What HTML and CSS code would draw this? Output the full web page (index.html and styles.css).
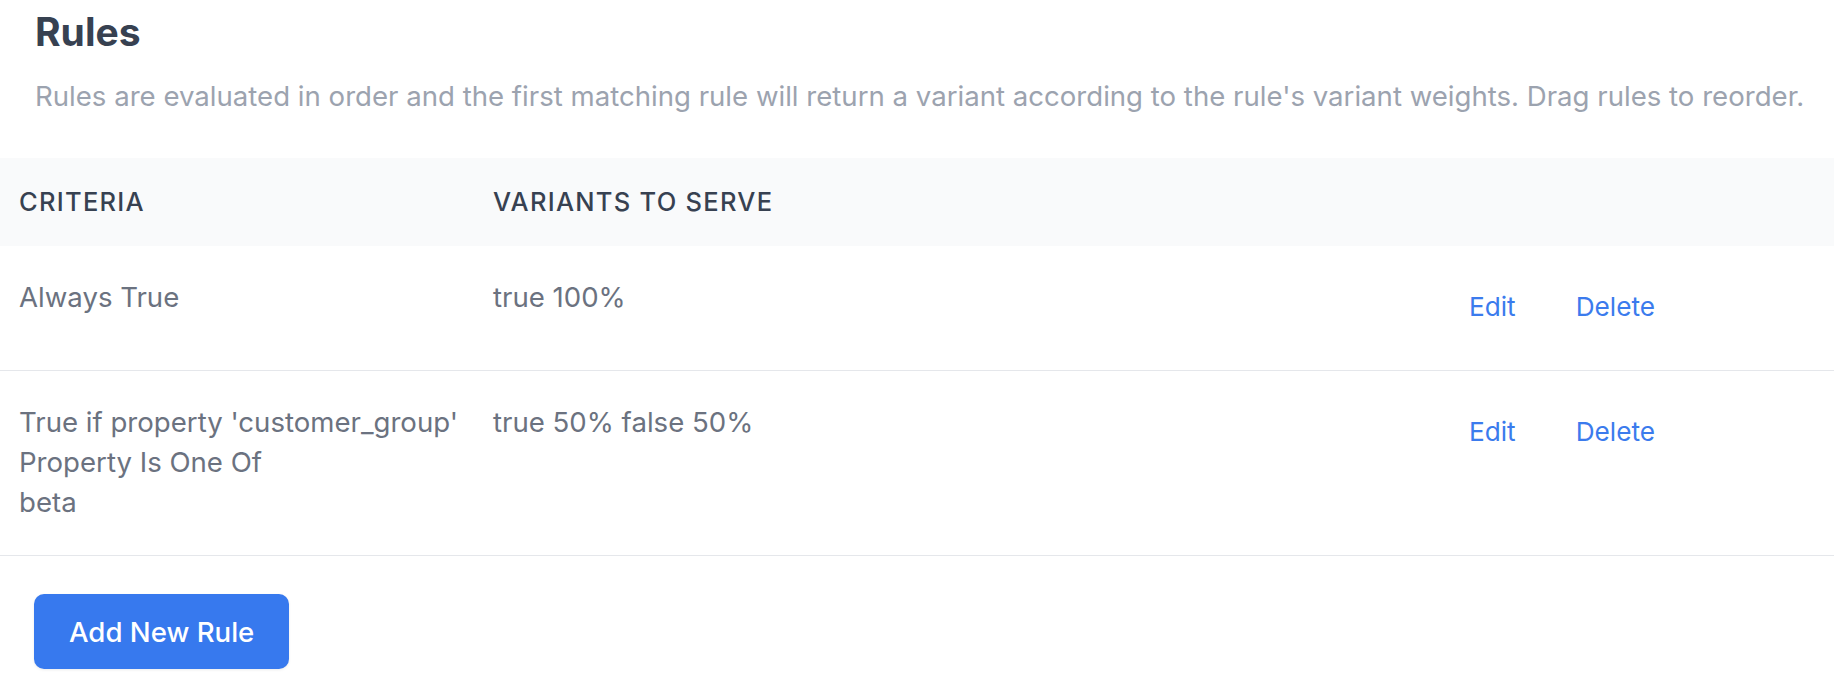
FILE: index.html
```html
<!DOCTYPE html>
<html lang="en">
<head>
<meta charset="utf-8">
<title>Rules</title>
<link rel="stylesheet" href="styles.css">
</head>
<body>
<section class="rules">
  <div class="intro">
    <h2 class="title">Rules</h2>
    <p class="subtitle">Rules are evaluated in order and the first matching rule will return a variant according to the rule's variant weights. Drag rules to reorder.</p>
  </div>
  <div class="table">
    <div class="row head">
      <div class="cell c1">Criteria</div>
      <div class="cell c2">Variants to serve</div>
      <div class="cell c3"></div>
    </div>
    <div class="row body">
      <div class="cell c1">Always True</div>
      <div class="cell c2">true 100%</div>
      <div class="cell c3 actions"><button class="link">Edit</button><button class="link del">Delete</button></div>
    </div>
    <div class="row body">
      <div class="cell c1">True if property 'customer_group'<br>Property Is One Of<br>beta</div>
      <div class="cell c2">true 50% false 50%</div>
      <div class="cell c3 actions"><button class="link">Edit</button><button class="link del">Delete</button></div>
    </div>
  </div>
  <div class="footer">
    <button class="primary">Add New Rule</button>
  </div>
</section>
</body>
</html>
```

FILE: styles.css
```css
* { box-sizing: border-box; }
html, body { margin: 0; padding: 0; background: #ffffff; }
body { font-family: Inter, "Noto Sans", sans-serif; }

.intro { padding: 5px 0 0 35px; }
.title {
  margin: 0;
  font-size: 39px;
  line-height: 53px;
  font-weight: 700;
  color: #374151;
}
.subtitle {
  margin: 18px 0 0 0;
  font-size: 27.6px;
  line-height: 40px;
  color: #9ca3af;
  white-space: nowrap;
}

.table { margin-top: 42px; }
.row {
  display: grid;
  grid-template-columns: 474px 977px 1fr;
}
.row.head { background: #f9fafb; }
.row.body { border-bottom: 1px solid #e5e7eb; }
.cell { padding-left: 19px; }
.head .cell {
  padding-top: 28px;
  padding-bottom: 28px;
  font-size: 25.5px;
  line-height: 32px;
  font-weight: 500;
  letter-spacing: 0.05em;
  text-transform: uppercase;
  color: #374151;
}
.body .cell {
  padding-top: 31px;
  padding-bottom: 33px;
  font-size: 27.6px;
  line-height: 40px;
  color: #6b7280;
}
.c3 { padding-left: 18px; }
.actions { display: flex; align-items: flex-start; gap: 60px; }
.link {
  border: 0;
  background: none;
  padding: 10px 0;
  margin: 0;
  font-family: inherit;
  font-size: 26.2px;
  line-height: 40px;
  color: #3b7bed;
  cursor: pointer;
}

.footer { padding: 38px 34px; }
.primary {
  border: 0;
  border-radius: 10px;
  background: #3779ee;
  color: #ffffff;
  font-family: inherit;
  font-size: 27.6px;
  font-weight: 500;
  line-height: 40px;
  padding: 17.5px 35px;
  box-shadow: 0 1px 3px rgba(0,0,0,0.08);
  cursor: pointer;
}
```
